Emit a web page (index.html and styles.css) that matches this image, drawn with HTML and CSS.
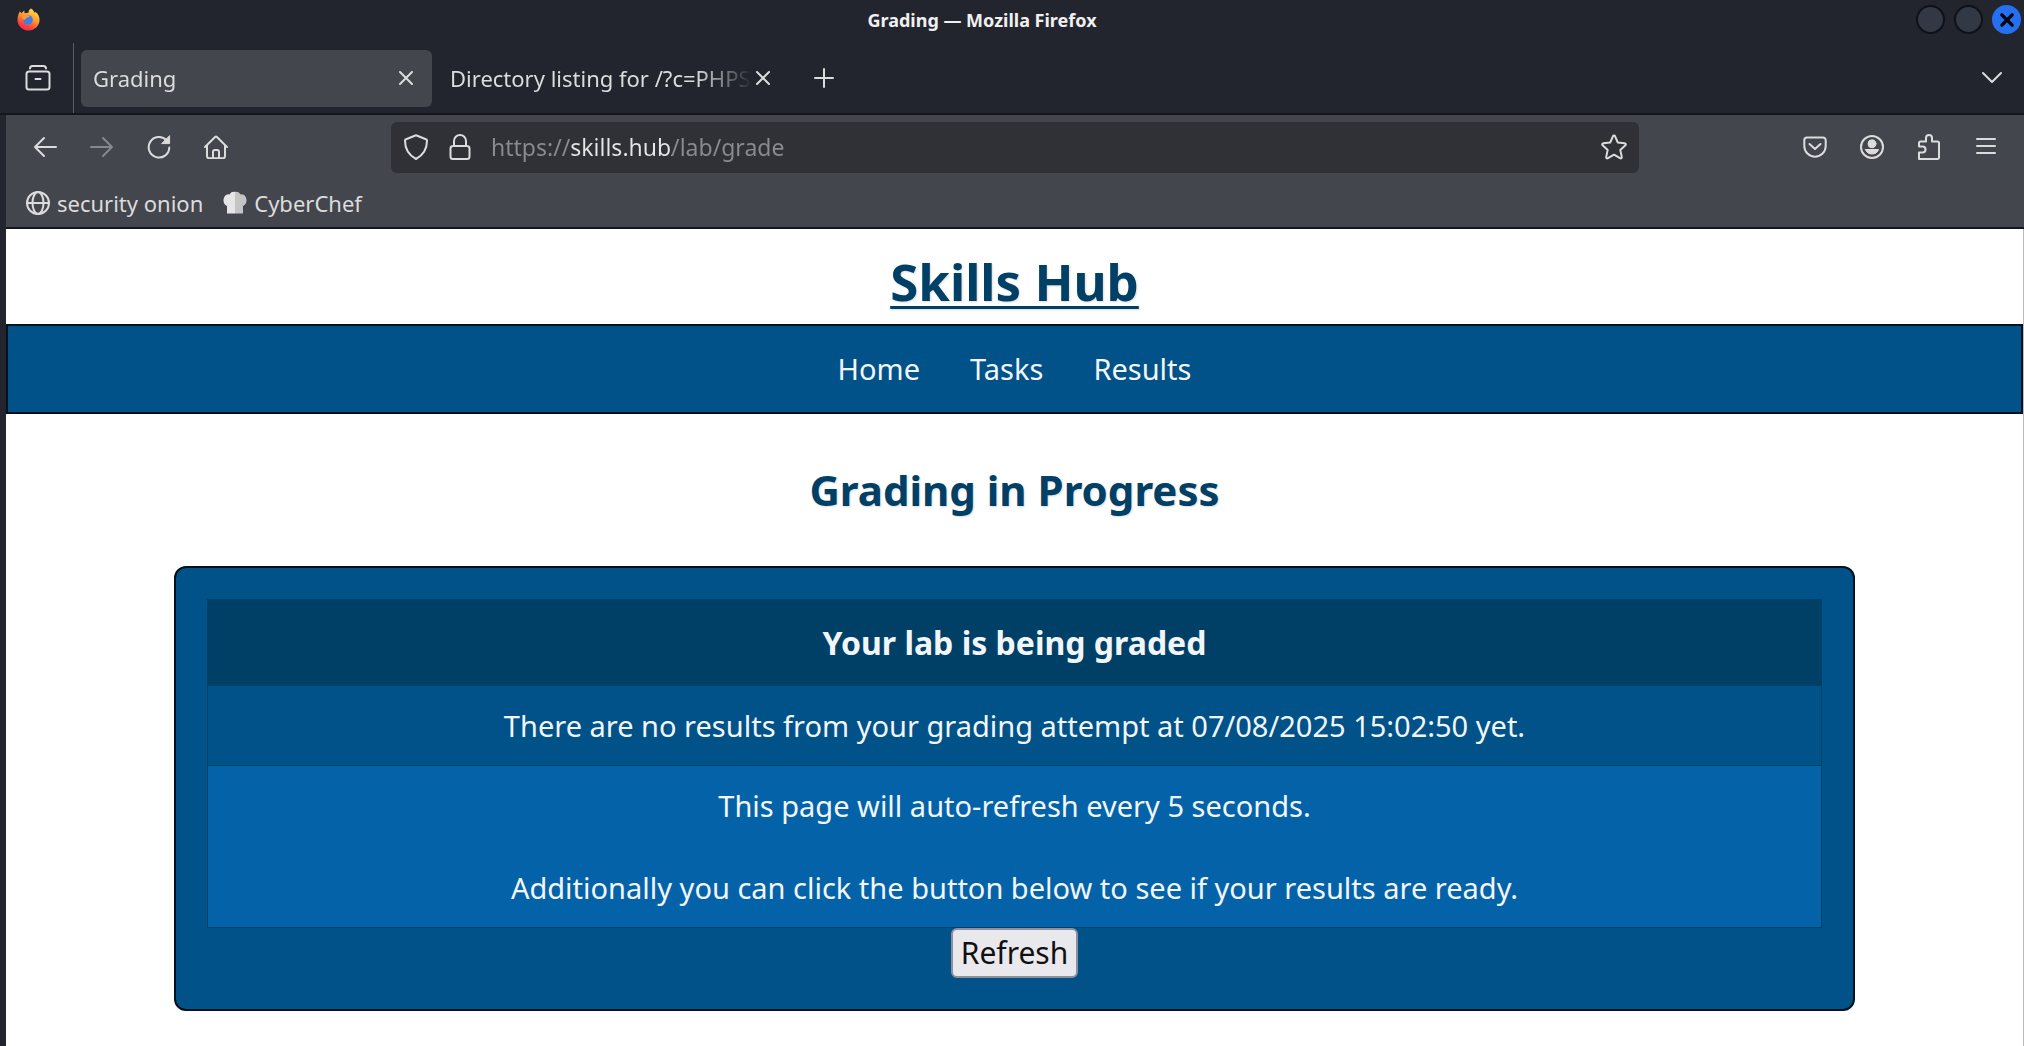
FILE: index.html
```html
<!DOCTYPE html>
<html lang="en">
<head>
<meta charset="utf-8">
<title>Grading</title>
<link rel="stylesheet" href="styles.css">
</head>
<body>
<div class="window">
  <header class="titlebar">
    <svg class="firefox" viewBox="0 0 24 24" aria-hidden="true">
      <defs>
        <linearGradient id="flame" x1="0.8" y1="0" x2="0.3" y2="1">
          <stop offset="0" stop-color="#ffe34d"/>
          <stop offset="0.45" stop-color="#ff9a2e"/>
          <stop offset="0.8" stop-color="#fb3f3c"/>
          <stop offset="1" stop-color="#ee2a5a"/>
        </linearGradient>
      </defs>
      <path fill="url(#flame)" d="M14.500.500c2 1 3 2.500 3.500 4 .8.300 1.500-.2 1.500-.2C22.500 6.500 23.500 9.500 23.500 12.500a11.500 11 0 0 1-23 0C.500 9 1.500 6 3 3.500L4.500 5.500 7.500 2.500 8 5.500l4-.5c0-2 1-3.500 2.500-4.500z"/>
      <circle cx="11.500" cy="12.500" r="5" fill="#3f7de8"/>
      <path fill="#ff9a2e" d="M4.500 7.500c3-1.500 5-1 6.500.2l2.500.5c-.5 1.500-2.500 1.800-3.500 2.300-1 .7-1.500 2-3 2z"/>
    </svg>
    <div class="window-title">Grading — Mozilla Firefox</div>
    <div class="window-buttons">
      <button class="window-button" aria-label="Minimize"></button>
      <button class="window-button" aria-label="Maximize"></button>
      <button class="window-button window-close" aria-label="Close">
        <svg viewBox="0 0 14 14"><path d="M2.500 2.500l9 9M11.500 2.500l-9 9"/></svg>
      </button>
    </div>
  </header>

  <div class="tabstrip">
    <button class="icon-button recent" aria-label="Recent browsing">
      <svg class="icon icon-large" viewBox="0 0 26 26"><path d="M5 3.500C5 1.800 6 1 7.500 1h11C20 1 21 1.800 21 3.500M4 6.500h18a2.500 2.500 0 0 1 2.500 2.500v13a2.500 2.500 0 0 1-2.500 2.500H4A2.500 2.500 0 0 1 1.500 22V9A2.500 2.500 0 0 1 4 6.500zM10.500 14h5"/></svg>
    </button>
    <div class="tab tab-active">
      <span class="tab-label">Grading</span>
      <button class="tab-close" aria-label="Close tab"><svg viewBox="0 0 14 14"><path d="M1 1l12 12M13 1L1 13"/></svg></button>
    </div>
    <div class="tab">
      <span class="tab-label">Directory listing for /?c=PHPS</span>
      <button class="tab-close" aria-label="Close tab"><svg viewBox="0 0 14 14"><path d="M1 1l12 12M13 1L1 13"/></svg></button>
    </div>
    <button class="icon-button new-tab" aria-label="New tab">
      <svg class="icon" viewBox="0 0 24 24"><path d="M12 3v18M3 12h18"/></svg>
    </button>
    <button class="icon-button all-tabs" aria-label="List all tabs">
      <svg class="icon" viewBox="0 0 24 24"><path d="M3 7l9 9 9-9"/></svg>
    </button>
  </div>

  <div class="toolbar">
    <div class="nav-row">
      <button class="icon-button" aria-label="Back"><svg class="icon" viewBox="0 0 24 24"><path d="M23 12H2M11 3l-9 9 9 9"/></svg></button>
      <button class="icon-button" aria-label="Forward" disabled><svg class="icon" viewBox="0 0 24 24"><path d="M1 12h21M13 3l9 9-9 9"/></svg></button>
      <button class="icon-button" aria-label="Reload"><svg class="icon" viewBox="0 0 24 24"><path d="M19.500 5.200A10.300 10.300 0 1 0 22.300 12.500"/><path class="solid" d="M22.600 1v7.600h-7.600z"/></svg></button>
      <button class="icon-button" aria-label="Home"><svg class="icon" viewBox="0 0 24 24"><path d="M1 12L10.800 2.200a1.700 1.700 0 0 1 2.400 0L23 12M3 10.500V21a2.300 2.300 0 0 0 2.300 2.300h13.400A2.300 2.300 0 0 0 21 21V10.500M9 23v-6a2 2 0 0 1 2-2h2a2 2 0 0 1 2 2v6"/></svg></button>
      <div class="spring"></div>
      <div class="urlbar">
        <svg class="icon icon-large" viewBox="0 0 26 26"><path d="M12.400 1.500a1.500 1.500 0 0 1 1.200 0l9.400 3.800a1.500 1.500 0 0 1 1 1.500C24 15 20.500 21 13 25 5.500 21 2 15 2 6.800a1.500 1.500 0 0 1 1-1.500z"/></svg>
        <svg class="icon icon-large" viewBox="0 0 26 26"><path d="M7 12V7a6 6 0 0 1 12 0v5M6 12h14a2.500 2.500 0 0 1 2.500 2.500v8A2.500 2.500 0 0 1 20 25H6a2.500 2.500 0 0 1-2.500-2.500v-8A2.500 2.500 0 0 1 6 12z"/></svg>
        <input class="url" type="text" aria-label="Address" value="https://skills.hub/lab/grade">
        <button class="star" aria-label="Bookmark this page"><svg class="icon icon-large" viewBox="0 0 26 26"><path d="M11.900 2.300a1.200 1.200 0 0 1 2.200 0l2.700 6.200 6.900.7a1.200 1.200 0 0 1 .7 2.100l-5.100 4.600 1.500 7a1.200 1.200 0 0 1-1.800 1.300L13 20.700l-6 3.500a1.200 1.200 0 0 1-1.800-1.300l1.500-7-5.100-4.600a1.200 1.200 0 0 1 .7-2.100l6.900-.7z"/></svg></button>
      </div>
      <div class="spring"></div>
      <button class="icon-button" aria-label="Save to Pocket"><svg class="icon" viewBox="0 0 24 24"><path d="M4 2.500h16a2.700 2.700 0 0 1 2.700 2.700V11a10.700 10.700 0 0 1-21.400 0V5.200A2.700 2.700 0 0 1 4 2.500zM6.500 9l5.500 5 5.500-5"/></svg></button>
      <button class="icon-button" aria-label="Account"><svg class="icon" viewBox="0 0 24 24"><circle cx="12" cy="12" r="11"/><circle class="solid" cx="12" cy="8.800" r="4"/><path class="solid" d="M5.500 14.500h13c-.7 3-3.500 4.500-6.500 4.500s-5.800-1.500-6.500-4.500z"/></svg></button>
      <button class="icon-button" aria-label="Extensions"><svg class="icon icon-large" viewBox="0 0 26 26"><path d="M3 25h18.500a1.500 1.500 0 0 0 1.500-1.500V9A1.500 1.500 0 0 0 21.500 7.500H16V4a3 3 0 0 0-6 0v3.500H4.500A1.500 1.500 0 0 0 3 9v3.500h3.500a3 3 0 0 1 0 6H3z"/></svg></button>
      <button class="icon-button" aria-label="Menu"><svg class="icon" viewBox="0 0 24 24"><path d="M3 4h18M3 11h18M3 18h18"/></svg></button>
    </div>
    <nav class="bookmarks" aria-label="Bookmarks">
      <a class="bookmark" href="#onion"><svg class="icon" viewBox="0 0 24 24"><circle cx="12" cy="12" r="11"/><ellipse cx="12" cy="12" rx="5.500" ry="11"/><path d="M1 12h22"/></svg>security onion</a>
      <a class="bookmark" href="#chef"><svg class="icon" viewBox="0 0 24 24"><path class="hat" d="M4 22v-7C1 13.500.300 11 .500 8.500 1 5 3.500 2.500 6.500 3.500 8 1 10 .500 12 1v21.500H4z"/><path class="hat-shade" d="M20 22v-7c3-1.500 3.700-4 3.500-6.500C23 5 20.500 2.500 17.500 3.500 16 1 14 .500 12 1v21.500h8z"/></svg>CyberChef</a>
    </nav>
  </div>

  <div class="page">
    <h1 class="site-title"><a href="#hub">Skills Hub</a></h1>
    <nav class="site-nav" aria-label="Site">
      <a href="#home">Home</a>
      <a href="#tasks">Tasks</a>
      <a href="#results">Results</a>
    </nav>
    <main class="content">
      <h2 class="heading">Grading in Progress</h2>
      <section class="card">
        <table class="status">
          <thead>
            <tr><th>Your lab is being graded</th></tr>
          </thead>
          <tbody>
            <tr><td>There are no results from your grading attempt at 07/08/2025 15:02:50 yet.</td></tr>
            <tr class="alt"><td>This page will auto-refresh every 5 seconds.<br><br>Additionally you can click the button below to see if your results are ready.</td></tr>
          </tbody>
        </table>
        <button class="refresh">Refresh</button>
      </section>
    </main>
  </div>
</div>
</body>
</html>
```

FILE: styles.css
```css
* {
  box-sizing: border-box;
}

body {
  margin: 0;
  background: #23252e;
  font-family: "Noto Sans", sans-serif;
}

button {
  padding: 0;
  border: 0;
  background: none;
  color: inherit;
  font: inherit;
}

svg {
  display: block;
  fill: none;
  stroke: currentColor;
  stroke-linecap: round;
  stroke-linejoin: round;
}

.window {
  display: flex;
  flex-direction: column;
  min-height: 100vh;
  color: #dcdcdc;
  font-size: 22px;
}

/* Title bar */
.titlebar {
  display: flex;
  align-items: center;
  height: 39px;
  padding: 0 3px 0 17px;
}

.firefox {
  width: 23px;
  height: 23px;
  stroke: none;
}

.window-title {
  flex: 1;
  padding-left: 8px;
  color: #f0f0f0;
  font-size: 18px;
  font-weight: 700;
  text-align: center;
}

.window-buttons {
  display: flex;
  gap: 9px;
}

.window-button {
  display: grid;
  place-items: center;
  width: 29px;
  height: 29px;
  border: 2px solid #101116;
  border-radius: 50%;
  background: #333845;
}

.window-close {
  border-color: #2570f0;
  background: #2570f0;
  color: #05070c;
}

.window-close svg {
  width: 16px;
  height: 16px;
  stroke-width: 3;
}

/* Tabs */
.tabstrip {
  display: flex;
  align-items: center;
  height: 76px;
  padding: 4px 4px 0 0;
  border-bottom: 2px solid #14161b;
}

.icon-button {
  display: grid;
  flex: none;
  place-items: center;
  width: 57px;
  height: 56px;
}

.icon-button:disabled {
  color: #86888c;
}

.icon {
  flex: none;
  width: 24px;
  height: 24px;
  stroke-width: 2;
}

.icon-large {
  width: 26px;
  height: 26px;
}

.icon .solid {
  fill: currentColor;
  stroke-width: 1;
}

.recent {
  width: 74px;
  height: 70px;
  margin-right: 7px;
  padding-left: 2px;
  border-right: 1px solid #5b5d65;
}

.tab {
  display: flex;
  align-items: center;
  gap: 4px;
  width: 351px;
  height: 57px;
  margin-right: 6px;
  padding: 0 19px 0 12px;
  border-radius: 6px;
}

.tab-active {
  background: #44464e;
}

.tab-label {
  flex: 1;
  overflow: hidden;
  white-space: nowrap;
  mask-image: linear-gradient(to left, transparent, #000 56px);
}

.tab-close svg {
  width: 14px;
  height: 14px;
  stroke-width: 2;
}

.all-tabs {
  margin-left: auto;
}

/* Navigation and bookmarks */
.toolbar {
  margin-left: 6px;
  border-bottom: 2px solid #14161b;
  background: #44464e;
}

.nav-row {
  display: flex;
  align-items: center;
  height: 64px;
  padding: 0 10px;
}

.spring {
  flex: none;
  width: 147px;
}

.urlbar {
  display: flex;
  flex: 1;
  align-items: center;
  gap: 18px;
  height: 51px;
  padding: 0 12px;
  border-radius: 6px;
  background: #303136;
}

.url {
  flex: 1;
  min-width: 0;
  padding: 0;
  border: 0;
  outline: 0;
  background: linear-gradient(to right, #8a8b8e 80px, #e6e6e6 80px, #e6e6e6 181px, #8a8b8e 181px);
  background-clip: text;
  color: transparent;
  font: inherit;
  font-size: 23px;
}

.bookmarks {
  display: flex;
  align-items: center;
  gap: 20px;
  height: 48px;
  padding: 0 20px;
}

.bookmark {
  display: flex;
  align-items: center;
  gap: 7px;
  color: inherit;
  text-decoration: none;
}

.hat {
  fill: #e6e6e6;
  stroke: none;
}

.hat-shade {
  fill: #c4c4c4;
  stroke: none;
}

/* Web page */
.page {
  flex: 1;
  margin-left: 6px;
  border-right: 1px solid #bbb;
  background: #fff;
  color: #f2f6fa;
  font-size: 29px;
}

.site-title {
  margin: 0;
  padding: 16px 0 7px;
  font-size: 51px;
  line-height: 72px;
  text-align: center;
  text-shadow: 1px 1px 2px rgba(0, 0, 0, 0.15);
}

.site-title a {
  color: #004066;
  text-decoration-thickness: 3px;
  text-underline-offset: 5px;
}

.site-nav {
  display: flex;
  justify-content: center;
  gap: 50px;
  padding: 23px 0;
  border: 2px solid #00101c;
  background: #005288;
  line-height: 40px;
}

.site-nav a {
  color: inherit;
  text-decoration: none;
}

.content {
  padding: 47px 168px 32px;
}

.heading {
  margin: 0 0 47px;
  color: #004066;
  font-size: 42px;
  line-height: 58px;
  text-align: center;
  text-shadow: 1px 1px 2px rgba(0, 0, 0, 0.15);
}

.card {
  display: flex;
  flex-direction: column;
  align-items: center;
  padding: 31px;
  border: 2px solid #00101c;
  border-radius: 12px;
  background: #005288;
}

.status {
  width: 100%;
  border-collapse: collapse;
  line-height: 41px;
  text-align: center;
}

.status th,
.status td {
  padding: 19px;
  border: 1px solid #004066;
}

.status th {
  padding: 22px;
  background: #004066;
  font-size: 32px;
}

.status .alt td {
  background: #0463a8;
}

.refresh {
  padding: 3px 8px;
  border: 2px solid #8f8f9d;
  border-radius: 6px;
  background: #e9e9ed;
  color: #111;
  font-size: 30px;
  line-height: 40px;
}
```
